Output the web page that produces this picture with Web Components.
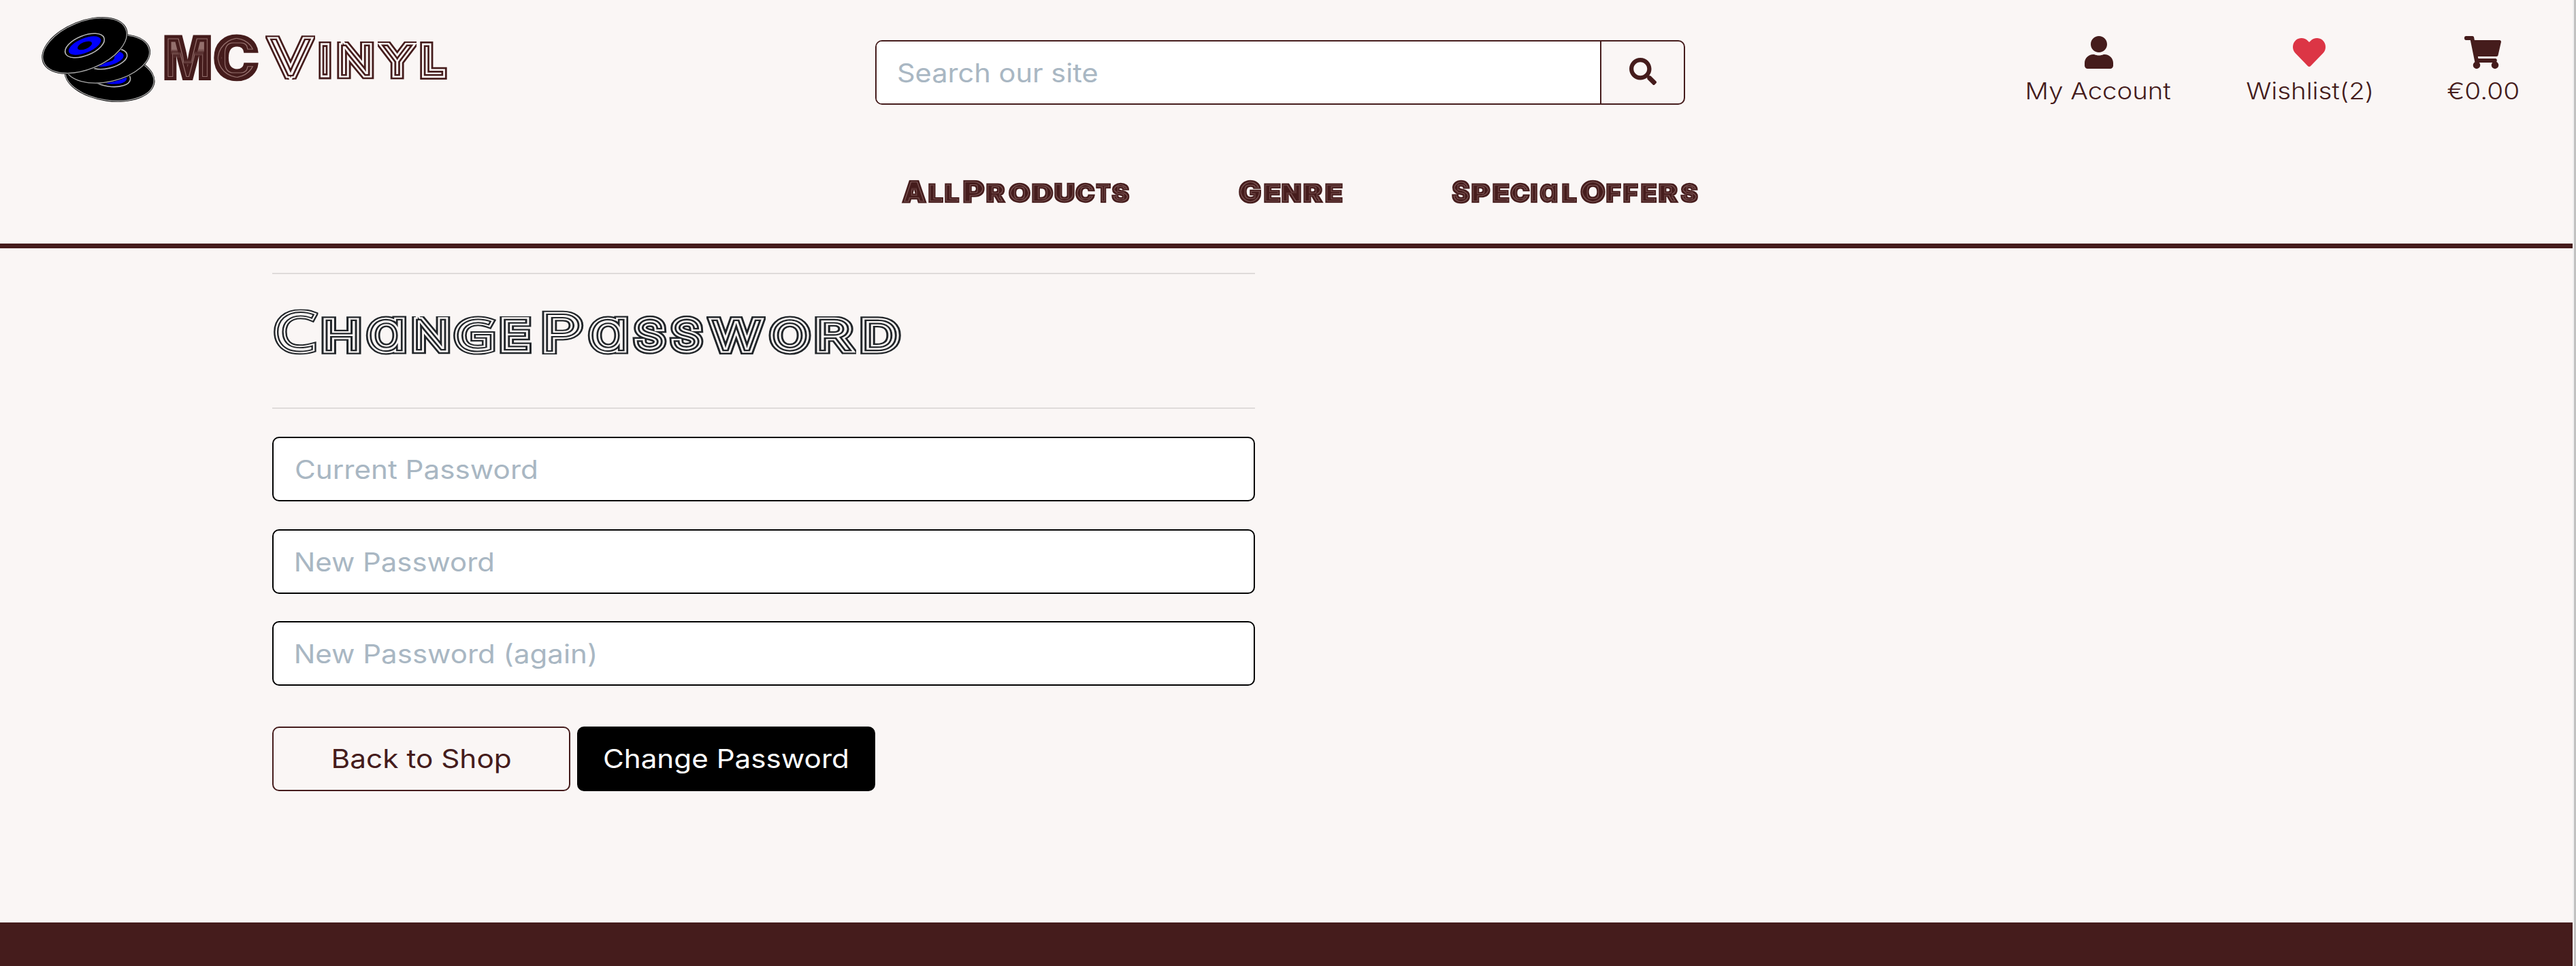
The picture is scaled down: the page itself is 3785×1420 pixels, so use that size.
<!DOCTYPE html>
<html lang="en">
<head>
<meta charset="utf-8">
<title>MC Vinyl - Change Password</title>
<style>
html,body{margin:0;height:100%;overflow:hidden}
body{background:#faf6f5;font-family:Inter,"Open Sans",sans-serif;color:#451c1c}
</style>
</head>
<body>
<vinyl-page></vinyl-page>
<script>
const ctx = document.createElement('canvas').getContext('2d');
function measure(text, font){ ctx.font = font; return ctx.measureText(text); }

/* Places text so its ink spans a given width, cap height and baseline.
   o.stem is the full thickness wanted for a stroked skeleton glyph;
   o.stroke is a fixed outline that only thickens a heavy glyph. */
function place(span, text, o){
  const family = o.family || 'Inter';
  const font = `${o.weight} 100px ${family}`;
  const m = measure(o.single ? 'q' : text, font);
  const capH = measure(o.single ? 'x' : 'H', font).actualBoundingBoxAscent;
  const l = measure('l', font);
  const thin = l.actualBoundingBoxRight + l.actualBoundingBoxLeft;
  const raw = m.actualBoundingBoxLeft + m.actualBoundingBoxRight;
  let s = o.stroke || 0, sx = 1, k = o.cap / capH;
  for (let n = 0; n < 12; n++) {
    if (o.stem) s = Math.max(1, o.stem / Math.sqrt(sx) - thin * k);
    k = (o.cap - s) / capH;
    sx = o.width / (raw * k + s);
  }
  const fs = k * 100;
  const base = (o.height - (m.fontBoundingBoxAscent + m.fontBoundingBoxDescent) * k) / 2 + m.fontBoundingBoxAscent * k;
  const dy = o.baseline - s / 2 - base;
  const dx = (m.actualBoundingBoxLeft * k + s / 2) * sx;
  span.textContent = text;
  span.style.cssText += `;display:inline-block;white-space:pre;font:${o.weight} ${fs}px/${o.height}px ${family},sans-serif;transform-origin:0 ${base}px;transform:matrix(${sx},0,0,1,${dx},${dy})`;
  if (o.single) span.style.fontFeatureSettings = '"cv11"';
  if (s) {
    /* trims the mitred tips to the cap height and advance of the glyph */
    const over = /[CGOSUa]/.test(text) ? 1.5 : 0;
    const t = o.baseline - o.cap - dy - over, b = o.baseline - dy + over;
    const x0 = (-1 - dx) / sx, x1 = (o.width + 1 - dx) / sx;
    span.style.clipPath = `polygon(${x0}px ${t}px,${x1}px ${t}px,${x1}px ${b}px,${x0}px ${b}px)`;
  }
  return s;
}

/* <fit-text width cap height baseline weight>: one run of text. */
customElements.define('fit-text', class extends HTMLElement {
  connectedCallback(){
    const n = (a, d) => parseFloat(this.getAttribute(a) || d);
    const r = this.attachShadow({mode:'open'});
    r.innerHTML = `<style>:host{display:block;flex:none;width:${n('width')}px;height:${n('height')}px;white-space:nowrap}</style><span></span>`;
    place(r.querySelector('span'), this.getAttribute('text'), {
      width:n('width'), cap:n('cap'), height:n('height'), baseline:n('baseline'), weight:n('weight',400)});
  }
});

/* <groove-text>: display lettering with record-groove lines running along each stroke.
   The spans attribute lists start-end pairs per glyph; big and small are cap heights. */
customElements.define('groove-text', class extends HTMLElement {
  connectedCallback(){
    const g = a => this.getAttribute(a);
    const text = g('text'), spans = g('spans').split(' ').map(s => s.split('-').map(Number));
    const h = +g('height'), b = +g('baseline'), big = +g('big'), small = +g('small');
    const end = spans[spans.length-1][1];
    const line = g('kind') === 'line';
    const filters = {
      solid:`<feMorphology in="SourceGraphic" operator="erode" radius="5" result="a"/>
        <feMorphology in="SourceGraphic" operator="erode" radius="6" result="b"/>
        <feMorphology in="SourceGraphic" operator="erode" radius="10" result="c"/>
        <feComposite in="a" in2="b" operator="out" result="r"/>
        <feFlood flood-color="#c9a9a3" flood-opacity=".6"/><feComposite in2="r" operator="in" result="l1"/>
        <feFlood flood-color="#c9a9a3" flood-opacity=".6"/><feComposite in2="c" operator="in" result="l2"/>
        <feMerge><feMergeNode in="SourceGraphic"/><feMergeNode in="l1"/><feMergeNode in="l2"/></feMerge>`,
      fine:`<feMorphology in="SourceGraphic" operator="erode" radius="2" result="a"/>
        <feMorphology in="SourceGraphic" operator="erode" radius="3" result="b"/>
        <feComposite in="a" in2="b" operator="out" result="r"/>
        <feFlood flood-color="#c0a09c" flood-opacity=".42"/><feComposite in2="r" operator="in" result="l1"/>
        <feMerge><feMergeNode in="SourceGraphic"/><feMergeNode in="l1"/></feMerge>`
    };
    const lineCss = `
      .row>span::before,.row>span::after{content:attr(data-c);position:absolute;left:0;top:0}
      .row>span::before{-webkit-text-stroke:calc(var(--w)*.66) #faf6f5}
      .row>span::after{-webkit-text-stroke:calc(var(--w)*.33) currentColor;-webkit-text-fill-color:#faf6f5;paint-order:stroke fill}`;
    const r = this.attachShadow({mode:'open'});
    r.innerHTML = `<style>
      :host{display:block;flex:none;width:${end}px;height:${h}px}
      svg{display:block;width:0;height:0}
      .row{display:flex;height:${h}px;${line ? '' : 'filter:url(#groove)'}}
      .row>span{flex:none;width:0;-webkit-text-stroke:var(--w) currentColor}
      ${line ? lineCss : ''}
    </style>${line ? '' : `<svg><filter id="groove" x="-5%" y="-10%" width="110%" height="120%" color-interpolation-filters="sRGB">${filters[g('kind')]}</filter></svg>`}<div class="row"></div>`;
    const row = r.querySelector('.row');
    let i = 0, cap = true;
    for (const ch of text) {
      const s = document.createElement('span');
      if (ch === ' ') { s.textContent = ' '; s.style.cssText = `white-space:pre;font-size:1px`; cap = true; row.append(s); continue; }
      const [x0,x1] = spans[i++];
      const next = spans[i] ? spans[i][0] : end;
      s.style.width = (next - x0) + 'px';
      const single = ch === 'a';
      const glyph = single ? 'a' : ch.toUpperCase();
      const o = {width:x1-x0, cap:(cap || g('caps') !== null) ? big : small, height:h, baseline:b, single};
      if (line) {
        const open = /[CG]/.test(glyph);
        Object.assign(o, {weight:open ? 300 : 200, family:open ? '"Open Sans"' : 'Inter', stem:open ? 18 : 19});
      } else Object.assign(o, {weight:single ? 700 : 900, stroke:g('kind') === 'solid' ? 3 : 2.4});
      const w = place(s, glyph, o);
      s.dataset.c = glyph;
      s.style.setProperty('--w', w + 'px');
      row.append(s);
      cap = false;
    }
  }
});

const icons = {
  search:['0 0 512 512','M505 442.7L405.3 343c-4.500-4.500-10.600-7-17-7H372c27.600-35.300 44-79.700 44-128C416 93.100 322.900 0 208 0S0 93.100 0 208s93.100 208 208 208c48.300 0 92.700-16.400 128-44v16.300c0 6.400 2.500 12.500 7 17l99.700 99.700c9.400 9.400 24.600 9.400 33.900 0l28.300-28.300c9.400-9.400 9.400-24.600.1-34zM208 336c-70.700 0-128-57.200-128-128 0-70.700 57.200-128 128-128 70.700 0 128 57.200 128 128 0 70.700-57.200 128-128 128z'],
  user:['0 0 448 512','M224 256c70.700 0 128-57.300 128-128S294.700 0 224 0 96 57.300 96 128s57.300 128 128 128zm89.600 32h-16.700c-22.200 10.200-46.900 16-72.900 16s-50.600-5.800-72.900-16h-16.700C60.200 288 0 348.200 0 422.400V464c0 26.500 21.500 48 48 48h352c26.500 0 48-21.500 48-48v-41.600c0-74.200-60.200-134.400-134.400-134.400z'],
  heart:['0 0 512 512','M462.300 62.600C407.500 15.900 326 24.300 275.700 76.200L256 96.500l-19.700-20.300C186.100 24.300 104.500 15.900 49.700 62.600c-62.800 53.600-66.100 149.800-9.900 207.900l193.500 199.800c12.500 12.900 32.800 12.900 45.300 0l193.500-199.800c56.300-58.100 53-154.300-9.800-207.900z'],
  cart:['0 0 576 512','M528.120 301.319l47.273-208C578.806 78.301 567.391 64 551.990 64H159.208l-9.166-44.810C147.758 8.021 137.930 0 126.529 0H24C10.745 0 0 10.745 0 24v16c0 13.255 10.745 24 24 24h69.883l70.248 343.435C147.325 417.100 136 435.222 136 456c0 30.928 25.072 56 56 56s56-25.072 56-56c0-15.674-6.447-29.835-16.824-40h209.647C430.447 426.165 424 440.326 424 456c0 30.928 25.072 56 56 56s56-25.072 56-56c0-22.172-12.888-41.332-31.579-50.405l5.517-24.276c3.413-15.018-8.002-29.319-23.403-29.319H218.117l-6.545-32h293.145c11.206 0 20.920-7.754 23.403-18.681z']
};
customElements.define('shop-icon', class extends HTMLElement {
  connectedCallback(){
    const [vb,d] = icons[this.getAttribute('name')];
    this.attachShadow({mode:'open'}).innerHTML = `<style>:host{display:block;flex:none;height:var(--size,48px)}svg{display:block;height:100%;fill:currentColor}</style><svg viewBox="${vb}"><path d="${d}"/></svg>`;
  }
});

customElements.define('vinyl-discs', class extends HTMLElement {
  connectedCallback(){
    const disc = (cx,cy,a,b,t) => `<g transform="translate(${cx} ${cy}) rotate(${t})">
      <ellipse rx="${a}" ry="${b}" fill="#000"/><ellipse rx="${a-1.500}" ry="${b-1.500}" fill="none" stroke="#aaa" stroke-width="1.300"/>
      <ellipse rx="${a*.46}" ry="${b*.4}" fill="#000" stroke="#b8b8b8" stroke-width="1.600"/>
      <ellipse rx="${a*.38}" ry="${b*.29}" fill="#00f"/><ellipse rx="${a*.17}" ry="${b*.14}" fill="#000"/></g>`;
    this.attachShadow({mode:'open'}).innerHTML = `<style>:host{display:block;flex:none;width:170px;height:130px}svg{display:block}</style>
      <svg width="170" height="130" viewBox="60 23 170 130">${disc(161,112.5,67,36.500,8)}${disc(157.700,86.500,64.500,35,-13)}${disc(124.500,67,66.500,36.500,-22)}</svg>`;
  }
});

customElements.define('account-link', class extends HTMLElement {
  connectedCallback(){
    this.attachShadow({mode:'open'}).innerHTML = `<style>:host{display:flex;flex:none;flex-direction:column;align-items:center;gap:8px}</style><slot></slot>`;
  }
});

customElements.define('search-box', class extends HTMLElement {
  connectedCallback(){
    this.attachShadow({mode:'open'}).innerHTML = `<style>
      :host{display:flex;flex:none;box-sizing:border-box;width:1190px;height:95px;border:2px solid #451c1c;border-radius:10px;overflow:hidden}
      .field{flex:1;background:#fff;padding-left:32px;color:#a9b7c3}
      .go{box-sizing:border-box;width:123px;border-left:2px solid #451c1c;display:flex;align-items:center;padding:0 0 3px 41px;--size:40px}
    </style><div class="field"><fit-text text="Search our site" width="292" cap="28" height="91" baseline="60"></fit-text></div>
    <div class="go"><shop-icon name="search"></shop-icon></div>`;
  }
});

customElements.define('shop-header', class extends HTMLElement {
  connectedCallback(){
    this.attachShadow({mode:'open'}).innerHTML = `<style>
      :host{display:block;box-sizing:border-box;height:365px;border-bottom:7px solid #451c1c;color:#451c1c}
      .top{display:flex;align-items:flex-start;height:230px}
      vinyl-discs{margin:23px 0 0 60px}
      .mc{margin:40px 0 0 11px}.vinyl{margin:40px 0 0 11px}
      search-box{margin:59px 0 0 629px}
      .links{display:flex;margin:53px 80px 0 auto}
      account-link+account-link{margin-left:112px}
      .heart{color:#dc3545}
      nav{display:flex;padding-left:1325px;color:#451c1c}
      nav groove-text+groove-text{margin-left:160px}
    </style>
    <div class="top">
      <vinyl-discs></vinyl-discs>
      <groove-text class="mc" kind="solid" caps text="MC" big="67" small="67" height="90" baseline="78" spans="0-69 73-139"></groove-text>
      <groove-text class="vinyl" kind="line" text="Vinyl" big="65" small="56" height="90" baseline="77" spans="0-71 77-96 104-159 165-220 226-266"></groove-text>
      <search-box></search-box>
      <div class="links">
        <account-link><shop-icon name="user"></shop-icon><fit-text text="My Account" width="210" cap="25" height="56" baseline="37" weight="300"></fit-text></account-link>
        <account-link><shop-icon class="heart" name="heart"></shop-icon><fit-text text="Wishlist(2)" width="183" cap="25" height="56" baseline="37" weight="300"></fit-text></account-link>
        <account-link><shop-icon name="cart"></shop-icon><fit-text text="€0.00" width="104" cap="25" height="56" baseline="37" weight="300"></fit-text></account-link>
      </div>
    </div>
    <nav>
      <groove-text kind="fine" text="All Products" big="34" small="29" height="90" baseline="68.500" spans="0-37 38.500-60.500 62.500-84 90-122 123.500-152 156.500-189 191-222.500 224-254 255-284 285-307 308-334.500"></groove-text>
      <groove-text kind="fine" text="Genre" big="34" small="29" height="90" baseline="68.500" spans="0-33 37-62 63.500-92.500 95-124 127-153"></groove-text>
      <groove-text kind="fine" text="Special Offers" big="34" small="29" height="90" baseline="68.500" spans="0-27 29-57 60-85 86-115 116.500-126.500 129-155.500 162-184 189-226 227.500-249.500 252.500-274.500 278.500-302 304.500-333.500 336.500-362.500"></groove-text>
    </nav>`;
  }
});

customElements.define('password-field', class extends HTMLElement {
  connectedCallback(){
    this.attachShadow({mode:'open'}).innerHTML = `<style>:host{display:block;box-sizing:border-box;height:95px;border:2px solid #000;border-radius:10px;background:#fff;color:#a9b7c3;padding-left:33px}</style><slot></slot>`;
  }
});
customElements.define('shop-button', class extends HTMLElement {
  connectedCallback(){
    this.attachShadow({mode:'open'}).innerHTML = `<style>:host{display:flex;justify-content:center;box-sizing:border-box;width:438px;height:95px;border:2px solid #451c1c;border-radius:10px;color:#451c1c;padding-left:1px}:host([dark]){background:#000;border-color:#000;color:#fff;padding:0 2px 0 0}</style><slot></slot>`;
  }
});

customElements.define('password-form', class extends HTMLElement {
  connectedCallback(){
    this.attachShadow({mode:'open'}).innerHTML = `<style>
      :host{display:block;width:1444px;margin-left:400px;padding-top:36px}
      .rule{height:2px;background:#dfdbda}
      h1{margin:0;padding:30px 0 0 2px;height:166px;color:#212529}
      .fields{display:flex;flex-direction:column;margin-top:41px}
      .fields>*+*{margin-top:41px}.fields>:last-child{margin-top:40px}
      .actions{display:flex;gap:10px;margin-top:60px}
    </style>
    <div class="rule"></div>
    <h1><groove-text kind="line" text="Change Password" big="65" small="56" height="110" baseline="88" spans="0-64.500 70-129 135-196 203-260 264-326 332-379 394-456 461-522 528-578 582-632 637-722 727-790 795-855 862-922"></groove-text></h1>
    <div class="rule"></div>
    <div class="fields">
      <password-field><fit-text text="Current Password" width="353" cap="28" height="91" baseline="60"></fit-text></password-field>
      <password-field><fit-text text="New Password" width="289" cap="28" height="91" baseline="60"></fit-text></password-field>
      <password-field><fit-text text="New Password (again)" width="439" cap="28" height="91" baseline="60"></fit-text></password-field>
    </div>
    <div class="actions">
      <shop-button><fit-text text="Back to Shop" width="260" cap="28" height="91" baseline="59"></fit-text></shop-button>
      <shop-button dark><fit-text text="Change Password" width="357" cap="28" height="91" baseline="59"></fit-text></shop-button>
    </div>`;
  }
});

customElements.define('vinyl-page', class extends HTMLElement {
  connectedCallback(){
    this.attachShadow({mode:'open'}).innerHTML = `<style>
      :host{display:flex;width:3785px;height:1420px}
      main{width:3780px;display:flex;flex-direction:column}
      password-form{flex:1}
      footer{height:64px;background:#451c1c}
      .track{box-sizing:border-box;width:5px;background:#c1c1c1;border-left:2px solid #f1f1f1}
    </style><main><shop-header></shop-header><password-form></password-form><footer></footer></main><div class="track"></div>`;
  }
});
</script>
</body>
</html>
